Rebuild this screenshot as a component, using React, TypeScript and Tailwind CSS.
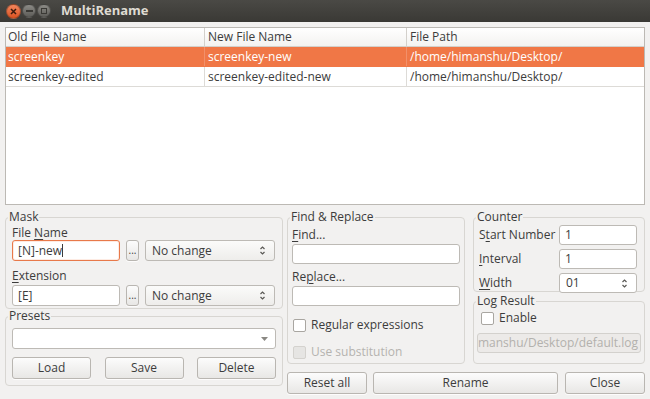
import React from "react";

const font = "font-['Open_Sans',sans-serif]";

function UpDown() {
  return (
    <svg width="7" height="11" viewBox="0 0 7 11" className="shrink-0">
      <path d="M1.5 4 L3.5 2 L5.5 4" fill="none" stroke="#5a5955" strokeWidth="1.2" />
      <path d="M1.5 7 L3.5 9 L5.5 7" fill="none" stroke="#5a5955" strokeWidth="1.2" />
    </svg>
  );
}

function Mn({ children }: { children: React.ReactNode }) {
  return <span className="underline underline-offset-2 decoration-1">{children}</span>;
}

function TextBox({ value, focused, className = "" }: { value?: string; focused?: boolean; className?: string }) {
  return (
    <div
      className={`flex items-center bg-white rounded-[3px] border px-[5px] text-[#3c3c3c] ${
        focused ? "border-[#e8794a] shadow-[inset_0_0_0_1px_rgba(240,119,70,0.15)]" : "border-[#bdbab5]"
      } ${className}`}
    >
      {value}
      {focused && <span className="w-px h-[13px] bg-[#3c3c3c]" />}
    </div>
  );
}

function Combo({ value, className = "" }: { value: string; className?: string }) {
  return (
    <div
      className={`flex items-center justify-between rounded-[3px] border border-[#bdbab5] bg-gradient-to-b from-[#fbfbfa] to-[#eeedeb] pl-[6px] pr-[8px] text-[#3c3c3c] ${className}`}
    >
      <span>{value}</span>
      <UpDown />
    </div>
  );
}

function Btn({ label, className = "" }: { label: React.ReactNode; className?: string }) {
  return (
    <div
      className={`flex items-center justify-center rounded-[3px] border border-[#b9b6b1] bg-gradient-to-b from-[#fcfcfc] to-[#e8e7e5] text-[#3c3c3c] shadow-[0_1px_0_rgba(255,255,255,0.8)] ${className}`}
    >
      {label}
    </div>
  );
}

function Check({ label, disabled }: { label: string; disabled?: boolean }) {
  return (
    <div className={`flex items-center gap-[5px] h-[16px] ${disabled ? "text-[#b5b3af]" : "text-[#3c3c3c]"}`}>
      <span
        className={`w-[13px] h-[13px] rounded-[2px] border ${
          disabled ? "border-[#d4d2ce] bg-[#e6e5e3]" : "border-[#a9a6a1] bg-white"
        }`}
      />
      {label}
    </div>
  );
}

function Group({ title, className = "", children }: { title: string; className?: string; children: React.ReactNode }) {
  return (
    <fieldset className={`min-w-0 border border-[#d8d6d2] rounded-[4px] ${className}`}>
      <legend className="ml-[2px] px-[1px] h-[14px] leading-[14px] text-[#3c3c3c]">{title}</legend>
      {children}
    </fieldset>
  );
}

const rows = [
  ["screenkey", "screenkey-new", "/home/himanshu/Desktop/"],
  ["screenkey-edited", "screenkey-edited-new", "/home/himanshu/Desktop/"],
];

export default function App() {
  return (
    <div className={`w-[650px] h-[399px] overflow-hidden bg-[#f2f1f0] flex flex-col text-[12px] ${font}`}>
      {/* Title bar */}
      <div className="h-[22px] shrink-0 flex items-center bg-gradient-to-b from-[#4a4945] to-[#3a3935] pl-[6px]">
        <div className="flex items-center">
          <span className="w-[15px] h-[15px] rounded-full bg-gradient-to-b from-[#f4865c] to-[#d9521f] flex items-center justify-center border border-[#3a2a22]/40">
            <svg width="7" height="7" viewBox="0 0 7 7">
              <path d="M1 1 L6 6 M6 1 L1 6" stroke="#3b1a0d" strokeWidth="1.5" />
            </svg>
          </span>
          <span className="ml-[1px] w-[14px] h-[14px] rounded-full bg-gradient-to-b from-[#8c8b86] to-[#5c5b57] flex items-center justify-center border border-black/30">
            <span className="w-[7px] h-[2px] bg-[#3a3935]" />
          </span>
          <span className="ml-[1px] w-[14px] h-[14px] rounded-full bg-gradient-to-b from-[#8c8b86] to-[#5c5b57] flex items-center justify-center border border-black/30">
            <span className="w-[6px] h-[6px] border-[1.5px] border-[#3a3935]" />
          </span>
        </div>
        <span className="ml-[10px] text-[13px] font-bold text-[#dfdbd2]">MultiRename</span>
      </div>

      <div className="flex-1 flex flex-col px-[5px] pt-[5px]">
        {/* File table */}
        <div className="h-[178px] shrink-0 bg-white border border-[#bcb9b4] text-[#3c3c3c]">
          <div className="flex h-[19px] border-b border-[#d3d0cb] bg-gradient-to-b from-white to-[#f3f2f0]">
            <div className="w-[199px] px-[2px] flex items-center border-r border-[#d3d0cb]">Old File Name</div>
            <div className="w-[202px] px-[3px] flex items-center border-r border-[#d3d0cb]">New File Name</div>
            <div className="flex-1 px-[3px] flex items-center">File Path</div>
          </div>
          {rows.map((r, i) => (
            <div
              key={i}
              className={`flex h-[20px] border-b ${
                i === 0 ? "bg-[#f07746] text-white border-[#f07746]" : "border-[#dddbd7]"
              }`}
            >
              <div className={`w-[199px] px-[2px] flex items-center border-r ${i === 0 ? "border-[#f2906a]" : "border-[#dddbd7]"}`}>
                {r[0]}
              </div>
              <div className={`w-[202px] px-[3px] flex items-center border-r ${i === 0 ? "border-[#f2906a]" : "border-[#dddbd7]"}`}>
                {r[1]}
              </div>
              <div className="flex-1 px-[3px] flex items-center">{r[2]}</div>
            </div>
          ))}
        </div>

        {/* Bottom panels */}
        <div className="flex gap-[4px] mt-[5px]">
          {/* Left column */}
          <div className="w-[278px] flex flex-col">
            <Group title="Mask" className="h-[99px]">
              <div className="px-[6px] text-[#3c3c3c]">
                <div className="h-[15px] mt-[1px] flex items-center">
                  File&nbsp;<Mn>N</Mn>ame
                </div>
                <div className="flex items-center gap-[6px] h-[21px]">
                  <TextBox value="[N]-new" focused className="w-[108px] h-[21px]" />
                  <Btn label="..." className="w-[13px] h-[21px] text-[10px]" />
                  <Combo value="No change" className="w-[130px] h-[21px]" />
                </div>
                <div className="h-[16px] mt-[7px] flex items-center">
                  <Mn>E</Mn>xtension
                </div>
                <div className="flex items-center gap-[6px] h-[21px] mt-[1px]">
                  <TextBox value="[E]" className="w-[108px] h-[21px]" />
                  <Btn label="..." className="w-[13px] h-[21px] text-[10px]" />
                  <Combo value="No change" className="w-[130px] h-[21px]" />
                </div>
              </div>
            </Group>
            <Group title="Presets" className="h-[77px]">
              <div className="px-[6px] pt-[5px]">
                <div className="flex h-[21px] rounded-[3px] border border-[#bdbab5] bg-white">
                  <div className="flex-1" />
                  <div className="w-[21px] flex items-center justify-center">
                    <svg width="7" height="4" viewBox="0 0 7 4">
                      <path d="M0 0 L7 0 L3.5 4 Z" fill="#8a8883" />
                    </svg>
                  </div>
                </div>
                <div className="flex justify-between mt-[8px]">
                  <Btn label="Load" className="w-[79px] h-[22px]" />
                  <Btn label="Save" className="w-[79px] h-[22px]" />
                  <Btn label="Delete" className="w-[79px] h-[22px]" />
                </div>
              </div>
            </Group>
          </div>

          {/* Right part */}
          <div className="flex-1 flex flex-col">
            <div className="flex gap-[8px]">
              <Group title="Find & Replace" className="w-[178px] h-[154px]">
                <div className="px-[4px] text-[#3c3c3c]">
                  <div className="h-[16px] mt-[3px] flex items-center">
                    <Mn>F</Mn>ind...
                  </div>
                  <TextBox className="h-[20px] mt-[1px]" />
                  <div className="h-[16px] mt-[5px] flex items-center">
                    Re<Mn>p</Mn>lace...
                  </div>
                  <TextBox className="h-[20px] mt-[1px]" />
                  <div className="mt-[11px] pl-[1px]">
                    <Check label="Regular expressions" />
                  </div>
                  <div className="mt-[11px] pl-[1px]">
                    <Check label="Use substitution" disabled />
                  </div>
                </div>
              </Group>
              <div className="w-[172px] flex flex-col gap-[2px]">
                <Group title="Counter" className="h-[82px]">
                  <div className="px-[5px] mt-[1px] grid grid-cols-[80px_1fr] gap-y-[4px] text-[#3c3c3c] pr-[7px]">
                    <div className="h-[20px] flex items-center">
                      S<Mn>t</Mn>art Number
                    </div>
                    <TextBox value="1" className="h-[20px]" />
                    <div className="h-[20px] flex items-center">
                      <Mn>I</Mn>nterval
                    </div>
                    <TextBox value="1" className="h-[20px]" />
                    <div className="h-[20px] flex items-center">
                      <Mn>W</Mn>idth
                    </div>
                    <Combo value="01" className="h-[20px] bg-none bg-white" />
                  </div>
                </Group>
                <Group title="Log Result" className="h-[70px]">
                  <div className="px-[3px]">
                    <div className="mt-[2px] pl-[4px]">
                      <Check label="Enable" />
                    </div>
                    <div className="mt-[7px] h-[20px] rounded-[3px] border border-[#d3d1cd] bg-[#eceae8] flex items-center justify-end overflow-hidden whitespace-nowrap pr-[2px] text-[#b3b1ad]">
                      <span className="shrink-0">/home/himanshu/Desktop/default.log</span>
                    </div>
                  </div>
                </Group>
              </div>
            </div>
            <div className="flex mt-[8px] gap-[6px]">
              <Btn label="Reset all" className="w-[80px] h-[22px]" />
              <Btn label="Rename" className="w-[185px] h-[22px]" />
              <Btn label="Close" className="ml-[1px] w-[80px] h-[22px]" />
            </div>
          </div>
        </div>
      </div>
    </div>
  );
}
